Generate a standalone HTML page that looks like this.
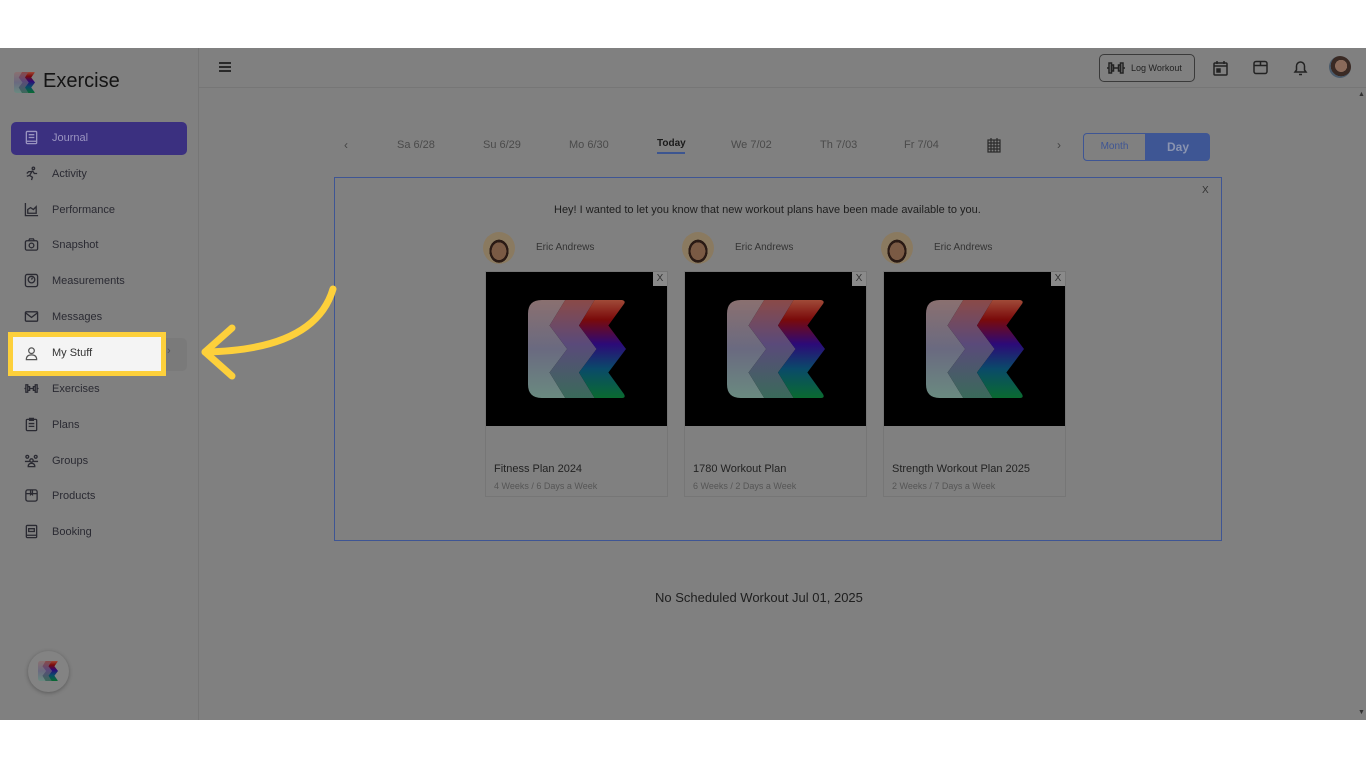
<!DOCTYPE html>
<html><head><meta charset="utf-8"><style>
*{margin:0;padding:0;box-sizing:border-box}
body{width:1366px;height:768px;background:#fff;position:relative;overflow:hidden;font-family:"Liberation Sans",sans-serif}
.app{position:absolute;left:0;top:48px;width:1366px;height:672px;background:#808080}
.side{position:absolute;left:0;top:0;width:199px;height:672px;border-right:1px solid #767676}
.hdr{position:absolute;left:199px;top:0;right:0;height:40px;border-bottom:1px solid #767676}
.abs{position:absolute}
.nav{position:absolute;left:24px;font-size:11px;color:#2a2a32;display:flex;align-items:center}
.nav svg{width:15px;height:15px;margin-right:13px;fill:none;stroke:#2a2a32;stroke-width:1.4}
.dt{position:absolute;top:139px;font-size:11px;color:#4a4a4a}
.card{position:absolute;top:271px;width:183px;height:226px;border:1px solid #767676}
.card .img{position:absolute;left:0;top:0;width:181px;height:154px;background:#000}
.card .x{position:absolute;right:0;top:0;width:14px;height:14px;background:#8a8a8a;font-size:10px;color:#333;text-align:center;line-height:14px}
.card .t{position:absolute;left:8px;top:191px;font-size:11px;color:#222}
.card .s{position:absolute;left:8px;top:209px;font-size:9px;color:#555}
.av{position:absolute;top:232px;width:32px;height:32px;border-radius:50%;background:radial-gradient(ellipse at 50% 60%,#7a5a44 0 32%,#2a1a14 33% 42%,#8a7a60 43%)}
.nm{position:absolute;top:242px;font-size:10px;color:#333}
</style></head><body>
<svg width="0" height="0" style="position:absolute"><defs>
<linearGradient id="g3" x1="0" y1="0" x2="0" y2="1"><stop offset="0" stop-color="#a04a38"/><stop offset=".2" stop-color="#7a0a0a"/><stop offset=".45" stop-color="#2c0a78"/><stop offset=".7" stop-color="#0a4a6a"/><stop offset="1" stop-color="#0a6a30"/></linearGradient>
<linearGradient id="g2" x1="0" y1="0" x2="0" y2="1"><stop offset="0" stop-color="#8a4a48"/><stop offset=".45" stop-color="#5a4a7a"/><stop offset="1" stop-color="#3a6a5a"/></linearGradient>
<linearGradient id="g1" x1="0" y1="0" x2="0" y2="1"><stop offset="0" stop-color="#8a7070"/><stop offset=".5" stop-color="#6a6a80"/><stop offset="1" stop-color="#6a8a80"/></linearGradient>
<symbol id="logo" viewBox="0 0 100 100">
<path d="M14 0H38L22 26L40 50L22 74L38 100H14Q0 100 0 86V14Q0 0 14 0Z" fill="url(#g1)"/>
<path d="M38 0H68L52 26L70 50L52 74L68 100H38L22 74L40 50L22 26Z" fill="url(#g2)"/>
<path d="M68 0H96Q100 1 98 4L82 26L100 50L82 74L98 96Q100 100 96 100H68L52 74L70 50L52 26Z" fill="url(#g3)"/>
</symbol></defs></svg>
<div class="app">
<div class="side">
<svg class="abs" style="left:14px;top:24px" width="21" height="21"><use href="#logo"/></svg>
<div class="abs" style="left:43px;top:22px;font-size:20px;color:#141414">Exercise</div>
<div class="abs" style="left:11px;top:74px;width:176px;height:33px;background:#3b3080;border-radius:5px"></div>
<div class="nav" style="top:82px;color:#9a94c0"><svg viewBox="0 0 16 16" style="stroke:#9a94c0"><rect x="2.5" y="1.5" width="11" height="13" rx="1"/><path d="M5 5h6M5 8h6M2.5 12h11"/></svg>Journal</div>
<div class="nav" style="top:118px"><svg viewBox="0 0 16 16"><circle cx="10" cy="2.5" r="1.3"/><path d="M9 5L6 10l3 2-1 3M9 5l2 3h3M6 10l-3 1M8 6H5L3 8"/></svg>Activity</div>
<div class="nav" style="top:154px"><svg viewBox="0 0 16 16"><path d="M1.5 1v13.5H15M4 12V8l3-2 3 2 3-3v7z"/></svg>Performance</div>
<div class="nav" style="top:189px"><svg viewBox="0 0 16 16"><rect x="1.5" y="4" width="13" height="10" rx="1.5"/><circle cx="8" cy="9" r="2.5"/><path d="M5 4l1-2h4l1 2"/></svg>Snapshot</div>
<div class="nav" style="top:225px"><svg viewBox="0 0 16 16"><rect x="1.5" y="1.5" width="13" height="13" rx="2"/><circle cx="8" cy="7" r="3.5"/><path d="M8 7l1-2"/></svg>Measurements</div>
<div class="nav" style="top:261px"><svg viewBox="0 0 16 16"><rect x="1.5" y="3" width="13" height="10" rx="1"/><path d="M1.5 4l6.5 5 6.5-5"/></svg>Messages</div>
<div class="abs" style="left:160px;top:290px;width:27px;height:33px;background:#7a7a7a;border-radius:0 5px 5px 0"></div>
<div class="abs" style="left:167px;top:297px;font-size:11px;color:#555">›</div>
<div class="nav" style="top:333px"><svg viewBox="0 0 16 16"><path d="M2 4h2v8H2zM12 4h2v8h-2zM4 6h2v4H4zM10 6h2v4h-2zM6 8h4M0.5 8H2M14 8h1.5"/></svg>Exercises</div>
<div class="nav" style="top:369px"><svg viewBox="0 0 16 16"><rect x="2.5" y="2.5" width="11" height="12" rx="1"/><path d="M6 1.5h4v2H6zM5 7h6M5 10h6"/></svg>Plans</div>
<div class="nav" style="top:405px"><svg viewBox="0 0 16 16"><circle cx="3.5" cy="4" r="1.5"/><circle cx="12.5" cy="4" r="1.5"/><circle cx="8" cy="8" r="1.8"/><path d="M1 9h5M10 9h5M4.5 14.5q0-3.5 3.5-3.5t3.5 3.5z"/></svg>Groups</div>
<div class="nav" style="top:440px"><svg viewBox="0 0 16 16"><rect x="2" y="2" width="12" height="12" rx="2"/><path d="M2 6h12M7 2v5l1-1 1 1V2"/></svg>Products</div>
<div class="nav" style="top:476px"><svg viewBox="0 0 16 16"><rect x="2.5" y="1.5" width="11" height="13" rx="1"/><path d="M5 5h6v3H5zM2.5 12h11"/></svg>Booking</div>
<div class="abs" style="left:28px;top:603px;width:41px;height:41px;border-radius:50%;background:#838383;box-shadow:0 1px 4px rgba(0,0,0,.3)"></div>
<svg class="abs" style="left:38px;top:613px" width="20" height="20"><use href="#logo"/></svg>
</div>
<div class="hdr">
<div class="abs" style="left:20px;top:14px;width:12px;height:2px;background:#2a2a2a;box-shadow:0 4px 0 #2a2a2a,0 8px 0 #2a2a2a"></div>
<div class="abs" style="left:900px;top:6px;width:96px;height:28px;border:1.5px solid #3a3a3a;border-radius:5px;font-size:9px;color:#222;padding:8px 0 0 31px">Log Workout</div>
<svg class="abs" style="left:908px;top:13px" width="18" height="14" viewBox="0 0 18 14" fill="none" stroke="#222" stroke-width="1.5"><rect x="2" y="2" width="2.5" height="10"/><rect x="13.5" y="2" width="2.5" height="10"/><rect x="4.5" y="4" width="2" height="6"/><rect x="11.5" y="4" width="2" height="6"/><path d="M6.5 7h5M0 7h2M16 7h2"/></svg>
<svg class="abs" style="left:1014px;top:12px" width="15" height="16" viewBox="0 0 15 16" fill="none" stroke="#222" stroke-width="1.5"><rect x="1" y="3" width="13" height="12" rx="1"/><path d="M1 6h13M4 1v3M11 1v3"/><rect x="4" y="9" width="3" height="3" fill="#222"/></svg>
<svg class="abs" style="left:1054px;top:12px" width="15" height="15" viewBox="0 0 15 15" fill="none" stroke="#222" stroke-width="1.5"><rect x="1" y="1.5" width="13" height="12" rx="2"/><path d="M1 5.5h13M7.5 1.5v4"/></svg>
<svg class="abs" style="left:1094px;top:11px" width="15" height="17" viewBox="0 0 15 17" fill="none" stroke="#222" stroke-width="1.5"><path d="M2 13h11l-1.5-2V7a4 4 0 0 0-8 0v4zM6 15.5h3"/></svg>
<div class="abs" style="left:1130px;top:8px;width:22px;height:22px;border-radius:50%;background:radial-gradient(circle at 55% 45%,#8a6a5a 0 35%,#3a2a24 36% 60%,#4a5a6a 61%)"></div>
</div>
<div class="abs" style="left:1358px;top:43px;font-size:7px;color:#333">▲</div>
<div class="abs" style="left:1358px;top:661px;font-size:7px;color:#333">▼</div>
<div class="abs" style="left:344px;top:90px;font-size:12px;color:#444">‹</div>
<div class="dt" style="left:397px;top:91px">Sa 6/28</div>
<div class="dt" style="left:483px;top:91px">Su 6/29</div>
<div class="dt" style="left:569px;top:91px">Mo 6/30</div>
<div class="dt" style="left:657px;top:90px;color:#1a1a1a;font-weight:bold;font-size:10px">Today</div>
<div class="abs" style="left:657px;top:104px;width:28px;height:2px;background:#3c5590"></div>
<div class="dt" style="left:731px;top:91px">We 7/02</div>
<div class="dt" style="left:820px;top:91px">Th 7/03</div>
<div class="dt" style="left:904px;top:91px">Fr 7/04</div>
<svg class="abs" style="left:987px;top:89px" width="14" height="16" viewBox="0 0 14 16" fill="none" stroke="#2a2a2a" stroke-width="1.2"><rect x="1" y="3" width="12" height="12"/><path d="M1 6h12M1 9h12M1 12h12M4 3v12M7 3v12M10 3v12M4 1v3M10 1v3"/></svg>
<div class="abs" style="left:1057px;top:90px;font-size:12px;color:#444">›</div>
<div class="abs" style="left:1083px;top:85px;width:63px;height:28px;border:1.5px solid #3e5594;border-radius:4px 0 0 4px;font-size:10px;color:#3e5594;text-align:center;line-height:26px">Month</div>
<div class="abs" style="left:1146px;top:85px;width:64px;height:28px;background:#3e5694;border-radius:0 4px 4px 0;font-size:12px;font-weight:bold;color:#8a94b0;text-align:center;line-height:28px">Day</div>
<div class="abs" style="left:334px;top:129px;width:888px;height:364px;border:1.5px solid #3e5594"></div>
<div class="abs" style="left:1202px;top:137px;font-size:10px;color:#333">X</div>
<div class="abs" style="left:554px;top:156px;font-size:11px;color:#1e1e1e">Hey! I wanted to let you know that new workout plans have been made available to you.</div>
</div>
<div class="av" style="left:483px"></div><div class="nm" style="left:536px">Eric Andrews</div>
<div class="av" style="left:682px"></div><div class="nm" style="left:735px">Eric Andrews</div>
<div class="av" style="left:881px"></div><div class="nm" style="left:934px">Eric Andrews</div>
<div class="card" style="left:485px"><div class="img"><svg class="abs" style="left:42px;top:28px" width="98" height="98"><use href="#logo"/></svg></div><div class="x">X</div><div class="t">Fitness Plan 2024</div><div class="s">4 Weeks / 6 Days a Week</div></div>
<div class="card" style="left:684px"><div class="img"><svg class="abs" style="left:42px;top:28px" width="98" height="98"><use href="#logo"/></svg></div><div class="x">X</div><div class="t">1780 Workout Plan</div><div class="s">6 Weeks / 2 Days a Week</div></div>
<div class="card" style="left:883px"><div class="img"><svg class="abs" style="left:42px;top:28px" width="98" height="98"><use href="#logo"/></svg></div><div class="x">X</div><div class="t">Strength Workout Plan 2025</div><div class="s">2 Weeks / 7 Days a Week</div></div>
<div class="abs" style="left:655px;top:590px;font-size:13px;color:#1e1e1e">No Scheduled Workout Jul 01, 2025</div>
<div class="abs" style="left:8px;top:332px;width:158px;height:44px;border:5px solid #fdd03b;background:#f4f4f4"></div>
<svg class="abs" style="left:24px;top:346px" width="15" height="15" viewBox="0 0 16 16" fill="none" stroke="#555" stroke-width="1.3"><circle cx="8" cy="5" r="3"/><path d="M2.5 14.5q0-5 5.5-5t5.5 5z"/></svg>
<div class="abs" style="left:52px;top:347px;font-size:11px;color:#333">My Stuff</div>
<svg class="abs" style="left:195px;top:280px" width="150" height="110" viewBox="0 0 150 110" fill="none" stroke="#fdd03b" stroke-width="7" stroke-linecap="round" stroke-linejoin="round"><path d="M138 9Q120 70 10 72"/><path d="M37 48L10 72L37 96"/></svg>
</body></html>
